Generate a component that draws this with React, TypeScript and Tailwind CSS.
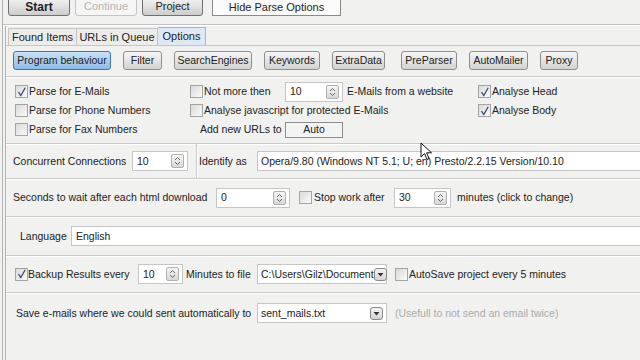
import React from 'react';

// small Win-classic style widgets

function Check({ on }: { on?: boolean }) {
  return (
    <span className="w-[13px] h-[13px] shrink-0 border border-[#a4a4a4] bg-gradient-to-br from-[#dadada] to-[#fafafa] flex items-center justify-center">
      {on && (
        <svg width="10" height="10" viewBox="0 0 10 10">
          <path d="M1.5 5.2 L3.8 8.6 L8.2 0.8" fill="none" stroke="#3b4c72" strokeWidth="1.3" />
        </svg>
      )}
    </span>
  );
}

function Spin() {
  return (
    <span className="w-[13px] h-[14px] shrink-0 border border-[#b0b0b0] rounded-[2px] bg-gradient-to-b from-[#f6f6f6] to-[#d8d8d8] flex items-center justify-center">
      <svg width="7" height="10" viewBox="0 0 7 10">
        <path d="M1 4 L3.5 1.5 L6 4 M1 6 L3.5 8.5 L6 6" fill="none" stroke="#666" strokeWidth="1" />
      </svg>
    </span>
  );
}

function Num({ value, w }: { value: string; w: string }) {
  return (
    <div className={`${w} h-[20px] shrink-0 border border-[#c6c6c6] bg-white flex items-center justify-between pl-[4px] pr-[3px]`}>
      <span>{value}</span>
      <Spin />
    </div>
  );
}

function Combo({ value }: { value: string }) {
  return (
    <div className="w-[130px] h-[20px] shrink-0 border border-[#c6c6c6] bg-white flex items-center justify-between pl-[3px] pr-[3px]">
      <span className="whitespace-nowrap leading-[14px]">{value}</span>
      <span className="w-[13px] h-[13px] shrink-0 border border-[#8a8a8a] rounded-[3px] bg-gradient-to-b from-[#f4f4f4] to-[#d4d4d4] flex items-center justify-center">
        <svg width="7" height="5" viewBox="0 0 7 5">
          <path d="M0.5 1 L6.5 1 L3.5 4.5 Z" fill="#333" />
        </svg>
      </span>
    </div>
  );
}

function SubBtn({ label, active, cls }: { label: string; active?: boolean; cls: string }) {
  return (
    <div
      className={`${cls} h-[19px] shrink-0 rounded-[3px] border flex items-center justify-center bg-gradient-to-b ${
        active ? 'border-[#3d78a9] from-[#c8e2f8] to-[#8dbbe4]' : 'border-[#8e8e8e] from-[#f5f5f5] to-[#d3d3d3]'
      }`}
    >
      {label}
    </div>
  );
}

const Row = ({ children }: { children: React.ReactNode }) => (
  <div className="h-[19px] flex items-center whitespace-nowrap">{children}</div>
);

const sect = 'border-b border-[#c9c9c9] shadow-[0_1px_0_#ffffff] flex items-center whitespace-nowrap';

export default function App() {
  return (
    <div className="w-[640px] h-[360px] overflow-hidden relative bg-[#f1f1ef] text-[10.5px] leading-none text-[#222] font-['Liberation_Sans',Arial,sans-serif]">
      <div className="ml-[2px] h-full border-l border-[#b3b3b3] flex flex-col">
        {/* toolbar */}
        <div className="h-[24px] shrink-0 flex items-start pl-[5px] text-[11px]">
          <div className="w-[62px] h-[19px] -mt-[3px] rounded-[3px] border border-[#707070] bg-gradient-to-b from-[#f4f4f4] to-[#cdcdcd] flex items-center justify-center text-[12px] font-bold">
            Start
          </div>
          <div className="ml-[5px] w-[62px] h-[19px] -mt-[3px] rounded-[3px] border border-[#c4c4c4] bg-[#f5f5f5] flex items-center justify-center text-[#b4b4b4]">
            Continue
          </div>
          <div className="ml-[5px] w-[61px] h-[19px] -mt-[3px] rounded-[3px] border border-[#707070] bg-gradient-to-b from-[#f4f4f4] to-[#cdcdcd] flex items-center justify-center">
            Project
          </div>
          <div className="ml-[9px] w-[129px] h-[17px] -mt-[1px] border border-[#8a8a8a] bg-[#fbfbfb] flex items-center justify-center">
            Hide Parse Options
          </div>
        </div>
        <div className="h-[2px] shrink-0 border-t border-[#c2c2c2] border-b border-b-white" />

        {/* options panel */}
        <div className="flex-1 ml-[2px] border-l border-[#b3b3b3] flex flex-col">
          {/* tabs */}
          <div className="h-[20px] shrink-0 pt-[2px] pl-[2px] flex border-b border-[#c6c6c6] text-[11px]">
            <div className="w-[69px] h-[17px] border border-[#c4c4c4] border-b-0 bg-[#ececea] flex items-center justify-center">Found Items</div>
            <div className="w-[81px] h-[17px] border-t border-r border-[#c4c4c4] bg-[#ececea] flex items-center justify-center">URLs in Queue</div>
            <div className="w-[48px] h-[18px] -mt-[1px] border-t border-r border-[#9fb7d1] bg-[#dde9f6] flex items-center justify-center">Options</div>
          </div>

          {/* sub buttons */}
          <div className="h-[31px] shrink-0 pt-[5px] pl-[7px] flex items-start border-b border-[#c9c9c9] shadow-[0_1px_0_#ffffff]">
            <SubBtn label="Program behaviour" active cls="w-[98px]" />
            <SubBtn label="Filter" cls="ml-[12px] w-[39px]" />
            <SubBtn label="SearchEngines" cls="ml-[12px] w-[78px]" />
            <SubBtn label="Keywords" cls="ml-[12px] w-[56px]" />
            <SubBtn label="ExtraData" cls="ml-[12px] w-[53px]" />
            <SubBtn label="PreParser" cls="ml-[16px] w-[56px]" />
            <SubBtn label="AutoMailer" cls="ml-[12px] w-[59px]" />
            <SubBtn label="Proxy" cls="ml-[12px] w-[38px]" />
          </div>

          {/* parse options */}
          <div className="h-[67px] shrink-0 pt-[5px] pl-[9px] flex items-start border-b border-[#c9c9c9] shadow-[0_1px_0_#ffffff] whitespace-nowrap">
            <div className="w-[175px] shrink-0 flex flex-col">
              <Row><Check on /><span className="ml-[1px]">Parse for E-Mails</span></Row>
              <Row><Check /><span className="ml-[1px]">Parse for Phone Numbers</span></Row>
              <Row><Check /><span className="ml-[1px]">Parse for Fax Numbers</span></Row>
            </div>
            <div className="w-[288px] shrink-0 flex flex-col">
              <Row>
                <Check />
                <span className="ml-[1px] w-[81px] shrink-0">Not more then</span>
                <Num value="10" w="w-[58px]" />
                <span className="ml-[4px]">E-Mails from a website</span>
              </Row>
              <Row><Check /><span className="ml-[1px]">Analyse javascript for protected E-Mails</span></Row>
              <Row>
                <span className="ml-[10px] w-[85px] shrink-0">Add new URLs to</span>
                <div className="w-[58px] h-[16px] border border-[#8c8c8c] bg-[#f3f3f3] flex items-center justify-center">Auto</div>
              </Row>
            </div>
            <div className="flex flex-col">
              <Row><Check on /><span className="ml-[1px]">Analyse Head</span></Row>
              <Row><Check on /><span className="ml-[1px]">Analyse Body</span></Row>
            </div>
          </div>

          {/* connections */}
          <div className={`h-[35px] shrink-0 pl-[7px] ${sect}`}>
            <span className="w-[119px] shrink-0">Concurrent Connections</span>
            <Num value="10" w="w-[56px]" />
            <div className="ml-[8px] self-stretch border-l border-[#c9c9c9] shadow-[1px_0_0_#ffffff]" />
            <span className="ml-[2px] w-[58px] shrink-0">Identify as</span>
            <div className="flex-1 h-[20px] border border-r-0 border-[#c6c6c6] bg-white flex items-center pl-[3px]">
              Opera/9.80 (Windows NT 5.1; U; en) Presto/2.2.15 Version/10.10
            </div>
          </div>

          {/* wait */}
          <div className={`h-[38px] shrink-0 pl-[7px] ${sect}`}>
            <span className="w-[203px] shrink-0">Seconds to wait after each html download</span>
            <Num value="0" w="w-[74px]" />
            <span className="ml-[9px]"><Check /></span>
            <span className="ml-[2px] w-[80px] shrink-0">Stop work after</span>
            <Num value="30" w="w-[57px]" />
            <span className="ml-[6px]">minutes (click to change)</span>
          </div>

          {/* language */}
          <div className={`h-[39px] shrink-0 pl-[14px] ${sect}`}>
            <span className="w-[51px] shrink-0">Language</span>
            <div className="flex-1 h-[20px] border border-r-0 border-[#c6c6c6] bg-white flex items-center pl-[4px]">English</div>
          </div>

          {/* backup */}
          <div className={`h-[37px] shrink-0 pl-[9px] ${sect}`}>
            <Check on />
            <span className="w-[110px] shrink-0">Backup Results every</span>
            <Num value="10" w="w-[45px]" />
            <span className="ml-[3px] w-[71px] shrink-0">Minutes to file</span>
            <Combo value="C:\Users\Gilz\Document" />
            <span className="ml-[8px]"><Check /></span>
            <span className="ml-[1px]">AutoSave project every 5 minutes</span>
          </div>

          {/* sent mails */}
          <div className="flex-1 pt-[10px] pl-[10px] flex items-start whitespace-nowrap">
            <div className="h-[20px] flex items-center">
              <span className="w-[241px] shrink-0">Save e-mails where we could sent automatically to</span>
              <Combo value="sent_mails.txt" />
              <span className="ml-[8px] text-[#ababab]">(Usefull to not send an email twice)</span>
            </div>
          </div>
        </div>
      </div>

      {/* mouse pointer */}
      <svg className="absolute left-[420px] top-[142px]" width="13" height="19" viewBox="0 0 13 19">
        <path d="M1 1 L1 15 L4.5 11.5 L7 17.5 L9 16.6 L6.6 10.8 L11.5 10.8 Z" fill="#fff" stroke="#111" strokeWidth="1" strokeLinejoin="round" />
      </svg>
    </div>
  );
}
